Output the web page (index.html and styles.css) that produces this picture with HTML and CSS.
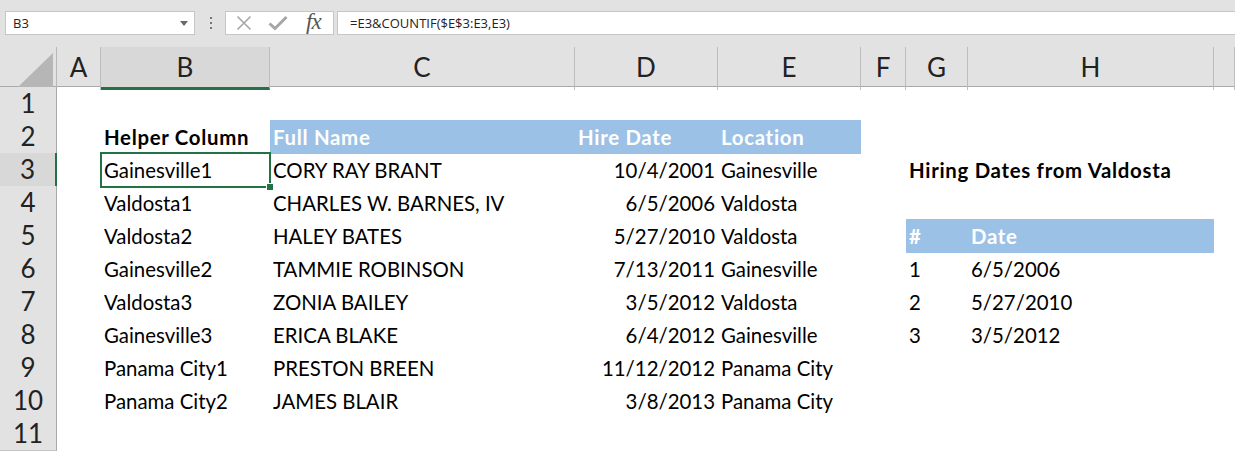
FILE: index.html
```html
<!DOCTYPE html>
<html lang="en">
<head>
    <meta charset="UTF-8">
    <title>Helper Column - COUNTIF</title>
    <link rel="stylesheet" href="styles.css">
</head>
<body>
<div class="toolbar">
    <div class="namebox">
        <span>B3</span>
        <svg class="arrow" width="8" height="5" viewBox="0 0 8 5"><path d="M0 0H8L4 5Z" fill="#6a6a6a"/></svg>
    </div>
    <svg class="dots" width="4" height="14" viewBox="0 0 4 14">
        <rect x="1" y="1" width="2" height="2" fill="#777"/>
        <rect x="1" y="6" width="2" height="2" fill="#777"/>
        <rect x="1" y="11" width="2" height="2" fill="#777"/>
    </svg>
    <div class="btns">
        <svg width="16" height="16" viewBox="0 0 16 16"><path d="M1.5 1.5L14.5 14.5M14.5 1.5L1.5 14.5" stroke="#a6a6a6" stroke-width="1.6"/></svg>
        <svg width="20" height="16" viewBox="0 0 20 16"><path d="M1.5 8.5L7 13.5L18.5 2" fill="none" stroke="#a6a6a6" stroke-width="3"/></svg>
        <span class="fx">fx</span>
    </div>
    <div class="formula">=E3&amp;COUNTIF($E$3:E3,E3)</div>
</div>

<div class="colhead">
    <div class="corner"><svg width="35" height="34" viewBox="0 0 35 34"><path d="M35 0V34H0Z" fill="#b6b6b6"/></svg></div>
    <div class="ch">A</div>
    <div class="ch sel">B</div>
    <div class="ch">C</div>
    <div class="ch">D</div>
    <div class="ch">E</div>
    <div class="ch">F</div>
    <div class="ch">G</div>
    <div class="ch">H</div>
    <div class="ch"></div>
</div>

<div class="sheet">
    <div class="row"><div class="rh">1</div></div>
    <div class="row">
        <div class="rh">2</div>
        <div class="c cb bold">Helper Column</div>
        <div class="c cc hd">Full Name</div>
        <div class="c cd hd">Hire Date</div>
        <div class="c ce hd">Location</div>
    </div>
    <div class="row">
        <div class="rh rsel">3</div>
        <div class="c cb active">Gainesville1</div>
        <div class="c cc">CORY RAY BRANT</div>
        <div class="c cd num">10/4/2001</div>
        <div class="c ce">Gainesville</div>
        <div class="c cg bold">Hiring Dates from Valdosta</div>
    </div>
    <div class="row">
        <div class="rh">4</div>
        <div class="c cb">Valdosta1</div>
        <div class="c cc">CHARLES W. BARNES, IV</div>
        <div class="c cd num">6/5/2006</div>
        <div class="c ce">Valdosta</div>
    </div>
    <div class="row">
        <div class="rh">5</div>
        <div class="c cb">Valdosta2</div>
        <div class="c cc">HALEY BATES</div>
        <div class="c cd num">5/27/2010</div>
        <div class="c ce">Valdosta</div>
        <div class="c cg hd">#</div>
        <div class="c chh hd">Date</div>
    </div>
    <div class="row">
        <div class="rh">6</div>
        <div class="c cb">Gainesville2</div>
        <div class="c cc">TAMMIE ROBINSON</div>
        <div class="c cd num">7/13/2011</div>
        <div class="c ce">Gainesville</div>
        <div class="c cg">1</div>
        <div class="c chh">6/5/2006</div>
    </div>
    <div class="row">
        <div class="rh">7</div>
        <div class="c cb">Valdosta3</div>
        <div class="c cc">ZONIA BAILEY</div>
        <div class="c cd num">3/5/2012</div>
        <div class="c ce">Valdosta</div>
        <div class="c cg">2</div>
        <div class="c chh">5/27/2010</div>
    </div>
    <div class="row">
        <div class="rh">8</div>
        <div class="c cb">Gainesville3</div>
        <div class="c cc">ERICA BLAKE</div>
        <div class="c cd num">6/4/2012</div>
        <div class="c ce">Gainesville</div>
        <div class="c cg">3</div>
        <div class="c chh">3/5/2012</div>
    </div>
    <div class="row">
        <div class="rh">9</div>
        <div class="c cb">Panama City1</div>
        <div class="c cc">PRESTON BREEN</div>
        <div class="c cd num">11/12/2012</div>
        <div class="c ce">Panama City</div>
    </div>
    <div class="row">
        <div class="rh">10</div>
        <div class="c cb">Panama City2</div>
        <div class="c cc">JAMES BLAIR</div>
        <div class="c cd num">3/8/2013</div>
        <div class="c ce">Panama City</div>
    </div>
    <div class="row"><div class="rh">11</div></div>
</div>
</body>
</html>
```

FILE: styles.css
```css
*{
    margin: 0;
    padding: 0;
    box-sizing: border-box;
}
body{
    width: 1235px;
    height: 452px;
    overflow: hidden;
    background: #fff;
    font-family: Lato, "Liberation Sans", sans-serif;
}

/* formula bar */
.toolbar{
    height: 47px;
    background: #e2e2e2;
    display: flex;
    align-items: flex-start;
    padding: 11px 0 0 5px;
}
.namebox{
    width: 190px;
    height: 24px;
    background: #fff;
    border: 1px solid #c6c6c6;
    display: flex;
    align-items: center;
    justify-content: space-between;
    padding: 0 6px 0 7px;
    font-family: "Open Sans", sans-serif;
    font-size: 13px;
    color: #222;
}
.dots{
    margin: 5px 0 0 14px;
}
.btns{
    width: 109px;
    height: 24px;
    margin-left: 12px;
    background: #fff;
    border: 1px solid #c6c6c6;
    display: flex;
    align-items: center;
    padding-left: 10px;
    gap: 18px;
}
.btns svg:nth-child(2){
    margin-left: -2px;
}
.fx{
    font-family: "Liberation Serif", serif;
    font-style: italic;
    font-size: 23px;
    color: #555;
    margin-left: 0;
    margin-top: -3px;
    letter-spacing: -1px;
}
.formula{
    flex: 1;
    height: 24px;
    margin-left: 3px;
    background: #fff;
    border: 1px solid #c6c6c6;
    border-right: none;
    padding-left: 12px;
    font-family: "Open Sans", sans-serif;
    font-size: 13px;
    line-height: 22px;
    color: #222;
}

/* grid */
.colhead, .row{
    display: grid;
    grid-template-columns: 57px 44px 169px 305px 143px 143px 45px 62px 246px 1fr;
}
.colhead{
    height: 40px;
    background: #e2e2e2;
    border-bottom: 1px solid #a9a9a9;
}
.corner{
    border-right: 1px solid #b8b8b8;
    display: flex;
    align-items: flex-end;
    justify-content: flex-end;
    padding: 0 3px 3px 0;
}
.ch{
    border-right: 1px solid #bdbdbd;
    text-align: center;
    font-size: 26px;
    line-height: 40px;
    color: #222;
}
.ch.sel{
    border-bottom: 3px solid #217346;
    background: #d8d8d8;
}
.row{
    height: 33px;
}
.rh{
    background: #e2e2e2;
    border-right: 1px solid #a9a9a9;
    border-bottom: 1px solid #c4c4c4;
    text-align: center;
    font-size: 26px;
    line-height: 33px;
    color: #222;
}
.rh.rsel{
    background: #d8d8d8;
    border-right: 2px solid #217346;
}
.c{
    font-size: 20.4px;
    line-height: 24px;
    padding: 5px 3px 4px 3px;
    color: #000;
    white-space: nowrap;
    overflow: visible;
}
.cb{ grid-column: 3; }
.cc{ grid-column: 4; }
.cd{ grid-column: 5; }
.ce{ grid-column: 6; }
.cg{ grid-column: 8; }
.chh{ grid-column: 9; }
.num{
    text-align: right;
}
.bold, .hd{
    font-weight: bold;
    letter-spacing: 0.7px;
}
.hd{
    background: #9bc2e6;
    color: #fff;
}
.active{
    position: relative;
    outline: 2px solid #217346;
    outline-offset: -1px;
}
.active::after{
    content: "";
    position: absolute;
    right: -4px;
    bottom: -4px;
    width: 6px;
    height: 6px;
    background: #217346;
    border: 1px solid #fff;
}
```
